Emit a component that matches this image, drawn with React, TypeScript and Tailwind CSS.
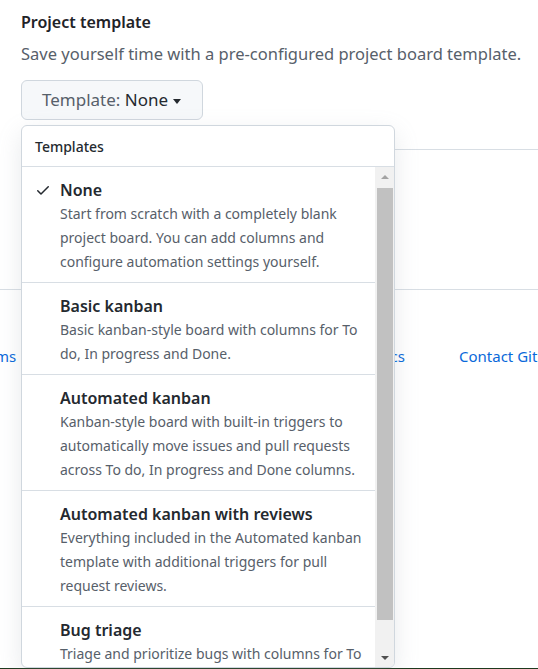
import React from 'react';

interface TemplateItem {
  name: string;
  lines: string[];
  selected?: boolean;
}

const templates: TemplateItem[] = [
  {
    name: 'None',
    selected: true,
    lines: [
      'Start from scratch with a completely blank',
      'project board. You can add columns and',
      'configure automation settings yourself.',
    ],
  },
  {
    name: 'Basic kanban',
    lines: ['Basic kanban-style board with columns for To', 'do, In progress and Done.'],
  },
  {
    name: 'Automated kanban',
    lines: [
      'Kanban-style board with built-in triggers to',
      'automatically move issues and pull requests',
      'across To do, In progress and Done columns.',
    ],
  },
  {
    name: 'Automated kanban with reviews',
    lines: [
      'Everything included in the Automated kanban',
      'template with additional triggers for pull',
      'request reviews.',
    ],
  },
  {
    name: 'Bug triage',
    lines: ['Triage and prioritize bugs with columns for To', 'do, High priority, Low priority, and Closed.'],
  },
];

function Check() {
  return (
    <svg width="16" height="16" viewBox="0 0 16 16" fill="#24292f">
      <path d="M13.78 4.22a.75.75 0 0 1 0 1.06l-7.25 7.25a.75.75 0 0 1-1.06 0L2.22 9.28a.75.75 0 0 1 1.06-1.06L6 10.94l6.72-6.72a.75.75 0 0 1 1.06 0Z" />
    </svg>
  );
}

function TemplateRow({ item }: { item: TemplateItem }) {
  return (
    <div className="flex border-b border-[#d8dee4] pl-[13px] pr-[8px] pt-[11px] pb-[8px]">
      <div className="w-[25px] shrink-0 pt-[4px]">{item.selected && <Check />}</div>
      <div className="min-w-0">
        <div className="text-[16px] leading-6 font-semibold text-[#24292f]">{item.name}</div>
        {item.lines.map((line) => (
          <div key={line} className="whitespace-nowrap text-[14px] leading-6 text-[#57606a]">
            {line}
          </div>
        ))}
      </div>
    </div>
  );
}

export default function App() {
  return (
    <div
      className="relative h-[669px] w-[538px] overflow-hidden bg-white"
      style={{ fontFamily: '"Noto Sans", "Segoe UI", sans-serif' }}
    >
      <div className="px-[21px] pt-[10px]">
        <h2 className="text-[16px] leading-6 font-semibold text-[#1f2328]">Project template</h2>
        <p className="mt-[8px] whitespace-nowrap text-[16.5px] leading-6 text-[#57606a]">
          Save yourself time with a pre-configured project board template.
        </p>
        <button className="mt-[14px] flex h-10 items-center rounded-md border border-[#d0d7de] bg-[#f6f8fa] pl-[20px] pr-[21px] text-[17px] text-[#57606a]">
          Template:&nbsp;<span className="text-[#24292f]">None</span>
          <span className="ml-[5px] mt-[2px] h-0 w-0 border-x-[4.5px] border-t-[5px] border-x-transparent border-t-[#24292f]" />
        </button>
      </div>

      <div className="ml-[200px] mt-[29px] h-px bg-[#d8dee4]" />
      <div className="mt-[139px] h-px bg-[#d8dee4]" />
      <div className="mt-[54px] flex text-[15px] leading-6 text-[#0969da]">
        <div className="flex w-[405px] shrink-0 justify-between">
          <span className="ml-[-27px]">Terms</span>
          <span>Privacy</span>
          <span>Security</span>
          <span>Status</span>
          <span>Docs</span>
        </div>
        <span className="ml-[54px] shrink-0 whitespace-nowrap">Contact GitHub</span>
      </div>

      <div className="absolute bottom-0 left-0 right-0 h-px bg-[#1e3a1e]" />

      <div className="absolute left-[21px] top-[125px] flex h-[543px] w-[374px] flex-col overflow-hidden rounded-md border border-[#d0d7de] bg-white shadow-[0_8px_24px_rgba(140,149,159,0.2)]">
        <div className="flex h-[41px] shrink-0 items-center border-b border-[#d8dee4] px-[13px] text-[14px] font-medium text-[#24292f]">
          Templates
        </div>
        <div className="flex min-h-0 flex-1">
          <div className="min-w-0 flex-1 overflow-hidden">
            {templates.map((t) => (
              <TemplateRow key={t.name} item={t} />
            ))}
          </div>
          <div className="flex w-[19px] shrink-0 flex-col bg-[#f1f1f1]">
            <div className="flex h-[19px] items-center justify-center">
              <span className="h-0 w-0 border-x-[4px] border-b-[4px] border-x-transparent border-b-[#a3a3a3]" />
            </div>
            <div className="ml-[2px] mr-[1px] mt-[2px] h-[432px] bg-[#c1c1c1]" />
            <div className="flex-1" />
            <div className="flex h-[19px] items-center justify-center">
              <span className="h-0 w-0 border-x-[4px] border-t-[4px] border-x-transparent border-t-[#505050]" />
            </div>
          </div>
        </div>
      </div>
    </div>
  );
}
